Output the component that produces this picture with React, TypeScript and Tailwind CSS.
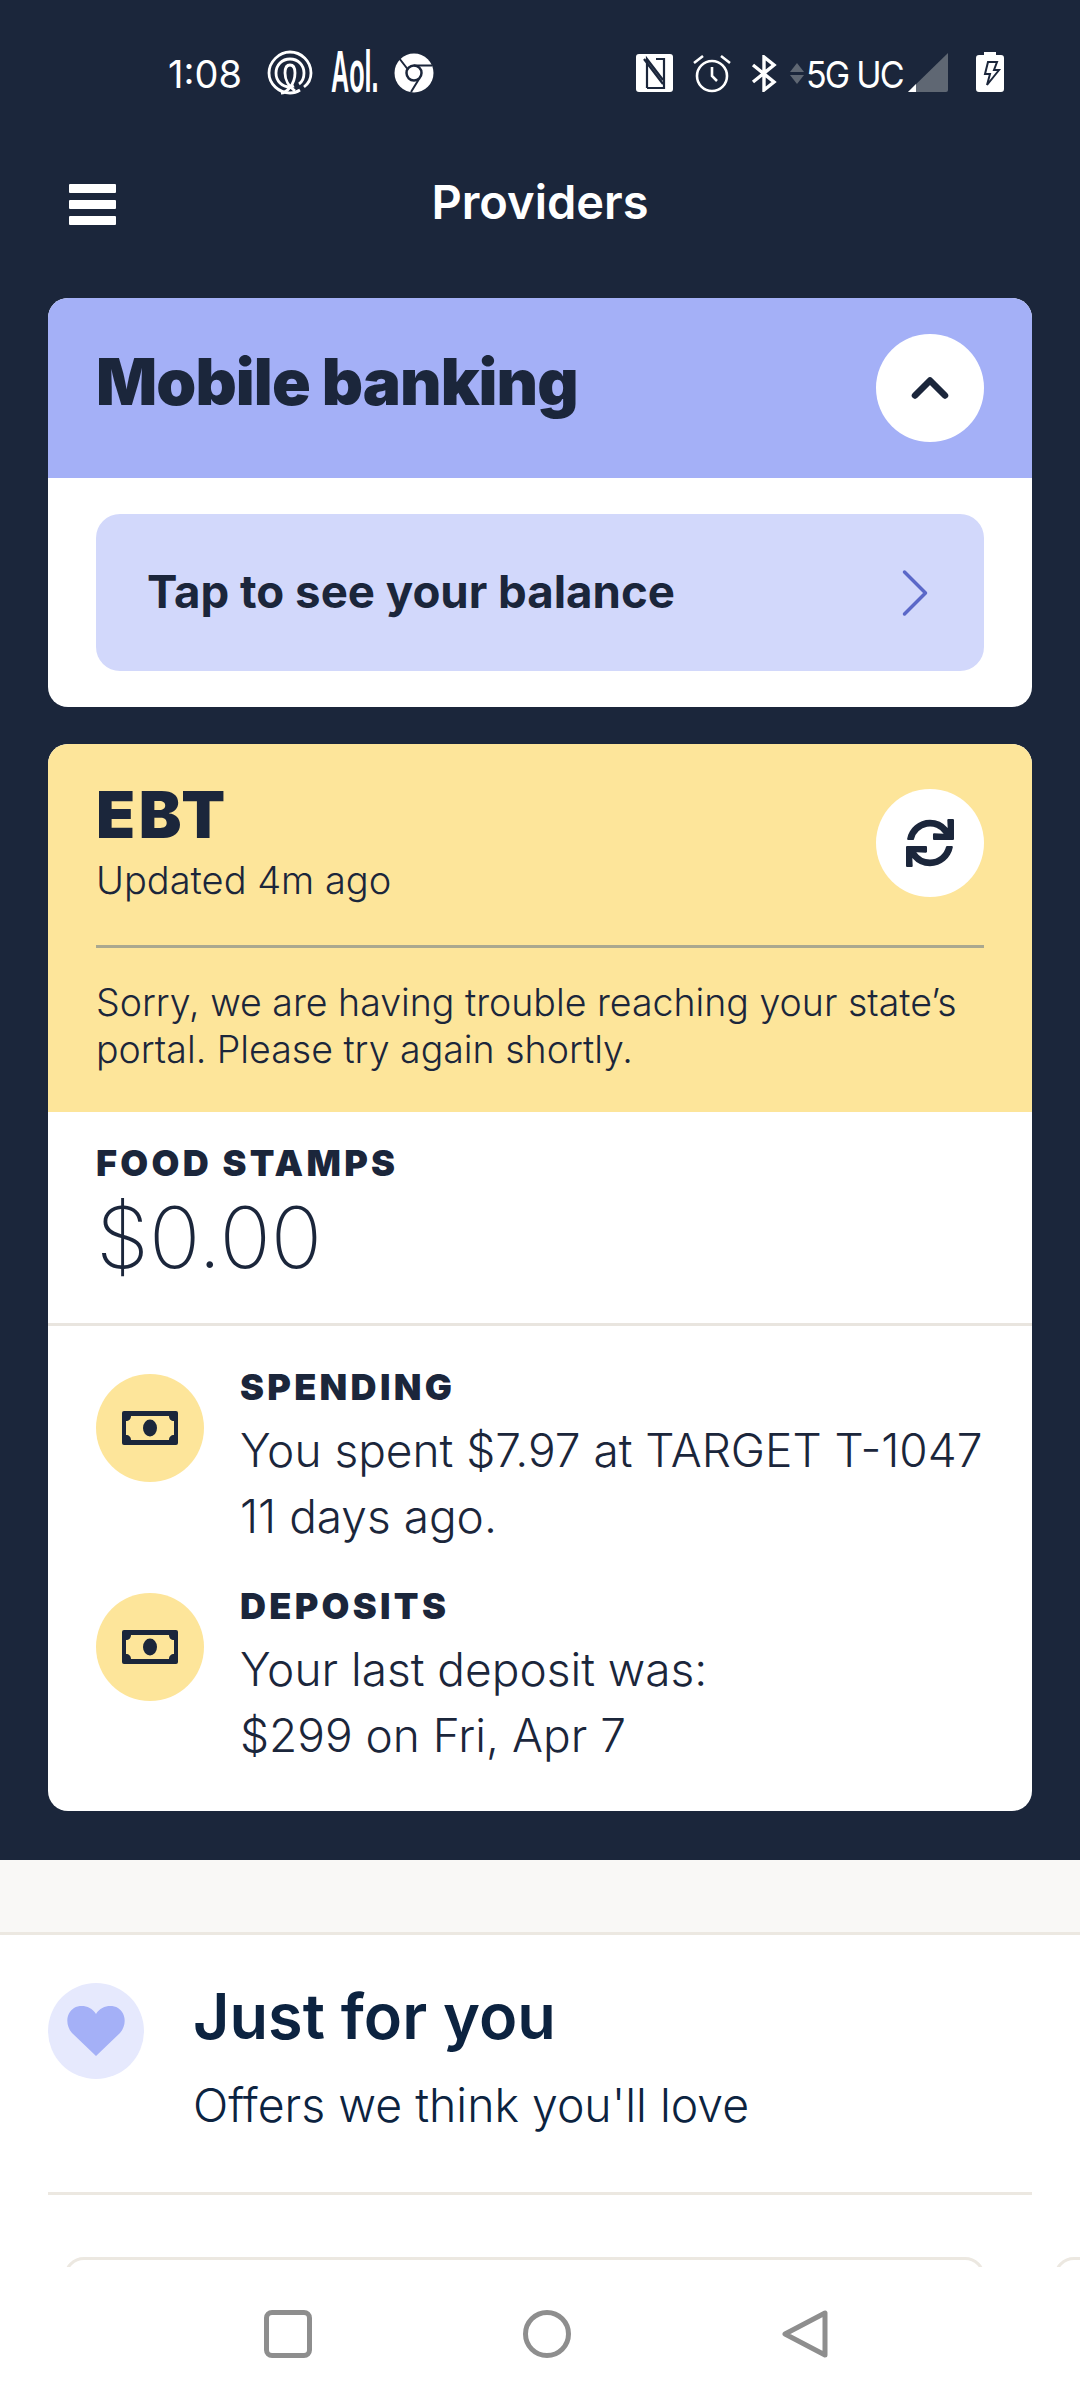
import React from 'react';
import { ChevronRight, ChevronUp } from 'lucide-react';
import { FaSync } from 'react-icons/fa';

const sans = 'font-["Inter","Noto_Sans",sans-serif]';

const ThreadsIcon = () => (
  <svg width="46" height="46" viewBox="0 0 46 46" fill="none" stroke="white" strokeWidth="2.8">
    <path d="M33 40c-3 2-6 3-10 3C12 43 2 34 2 23S12 2 23 2s21 9 21 21c0 6-3 11-7 14" />
    <path d="M27 36c-1 .5-3 1-4 1-8 0-14-6-14-14S15 9 23 9s14 6 14 14c0 5-2 9-5 11" />
    <path d="M14 43c5 0 14-8 14-20 0-5-2-8-5-8s-5 3-5 8c0 7 4 14 10 18" />
  </svg>
);

const ChromeIcon = () => (
  <svg width="40" height="40" viewBox="0 0 40 40">
    <circle cx="20" cy="20" r="19.5" fill="white" />
    <circle cx="20" cy="20" r="7.5" fill="white" stroke="#1b263b" strokeWidth="2.5" />
    <path d="M20 12.5h18M13.5 16 5 5M25 26l-8 13" stroke="#1b263b" strokeWidth="2" fill="none" />
  </svg>
);

const NfcIcon = () => (
  <svg width="37" height="38" viewBox="0 0 37 38">
    <rect width="37" height="38" rx="3" fill="white" />
    <path d="M11 34V5l16 21M8 5l19 25M20 5h8v29H11" stroke="#1b263b" strokeWidth="2.2" fill="none" />
  </svg>
);

const AlarmIcon = () => (
  <svg width="40" height="41" viewBox="0 0 40 41" fill="none" stroke="white" strokeWidth="2.6">
    <circle cx="20" cy="24" r="15" />
    <path d="M20 15v9l5 5M2 11l9-7M38 11l-9-7" />
  </svg>
);

const BluetoothIcon = () => (
  <svg width="26" height="37" viewBox="0 0 26 37" fill="none" stroke="white" strokeWidth="3.4">
    <path d="M2 10l21 17-10 8V2l10 8L2 27" />
  </svg>
);

const SignalIcon = () => (
  <svg width="40" height="39" viewBox="0 0 40 39">
    <path d="M40 0v37a2 2 0 0 1-2 2H0z" fill="#5f6773" />
    <path d="M8 31v8H0z" fill="white" />
  </svg>
);

const BatteryIcon = () => (
  <svg width="28" height="40" viewBox="0 0 28 40">
    <path d="M8 0h12v3h5a3 3 0 0 1 3 3v31a3 3 0 0 1-3 3H3a3 3 0 0 1-3-3V6a3 3 0 0 1 3-3h5z" fill="white" />
    <path d="M12 10h9l-3 8h5L11 33l3-11H9z" fill="none" stroke="#1b263b" strokeWidth="2" />
  </svg>
);

const BillIcon = () => (
  <svg width="56" height="34" viewBox="0 0 56 34">
    <rect width="56" height="34" rx="2" fill="#1b263b" />
    <path d="M9 5h38c0 3 2 5 5 5v14c-3 0-5 2-5 5H9c0-3-2-5-5-5V10c3 0 5-2 5-5z" fill="#fde59a" />
    <ellipse cx="28" cy="17" rx="7" ry="8.5" fill="#1b263b" />
  </svg>
);

const Activity = ({ label, lines }: { label: string; lines: string[] }) => (
  <div className="flex gap-[36px]">
    <div className="mt-[6px] flex h-[108px] w-[108px] shrink-0 items-center justify-center rounded-full bg-[#fde59a]">
      <BillIcon />
    </div>
    <div className="min-w-0">
      <div className="mb-[11px] text-[36px] leading-[38px] font-black tracking-[3.3px]">{label}</div>
      {lines.map((line) => (
        <div key={line} className="text-[46px] leading-[66px] font-light whitespace-nowrap">
          {line}
        </div>
      ))}
    </div>
  </div>
);

export default function App() {
  return (
    <div className={`${sans} flex h-[2400px] w-[1080px] flex-col overflow-hidden bg-white text-[#1b263b]`}>
      <div className="min-h-0 flex-1 overflow-hidden">
        <div className="h-[1860px] bg-[#1b263b]">
          <div className="flex h-[144px] items-start pt-[50px] text-white">
            <span className="ml-[168px] mt-[2px] w-[73px] text-[38px] leading-[44px]">1:08</span>
            <span className="ml-[26px]"><ThreadsIcon /></span>
            <span className="ml-[18px] w-[46px] shrink-0 overflow-visible">
              <span className="block origin-left scale-x-[0.42] font-['Liberation_Sans',sans-serif] text-[60px] leading-[44px] font-bold whitespace-nowrap">Aol.</span>
            </span>
            <span className="ml-[17px] mt-[3px]"><ChromeIcon /></span>
            <span className="ml-[202px] mt-[4px]"><NfcIcon /></span>
            <span className="ml-[19px] mt-[2px]"><AlarmIcon /></span>
            <span className="ml-[19px] mt-[5px]"><BluetoothIcon /></span>
            <span className="ml-[13px] mt-[13px] flex w-[15px] flex-col gap-[3px]">
              <span className="h-0 w-0 border-x-[7px] border-b-[9px] border-x-transparent border-b-[#5f6773]" />
              <span className="h-0 w-0 border-x-[7px] border-t-[9px] border-x-transparent border-t-[#5f6773]" />
            </span>
            <span className="ml-[1px] mt-[3px] w-[102px] shrink-0">
              <span className="block origin-left scale-x-[0.92] text-[37px] leading-[44px] whitespace-nowrap tracking-[-2px]">5G UC</span>
            </span>
            <span className="mt-[3px]"><SignalIcon /></span>
            <span className="ml-[28px] mt-[2px]"><BatteryIcon /></span>
          </div>

          <div className="relative flex h-[154px] items-start justify-center pt-[32px]">
            <div className="absolute top-[40px] left-[69px] flex w-[47px] flex-col gap-[7px]">
              <span className="h-[9px] rounded-[1px] bg-white" />
              <span className="h-[9px] rounded-[1px] bg-white" />
              <span className="h-[9px] rounded-[1px] bg-white" />
            </div>
            <h1 className="text-[47px] leading-[52px] font-semibold text-white">Providers</h1>
          </div>

          <div className="mx-[48px] overflow-hidden rounded-[20px] bg-white">
            <div className="flex h-[180px] items-center justify-between bg-[#a4b0f7] px-[48px]">
              <h2 className="mb-[12px] text-[64px] font-black tracking-[-0.9px]">Mobile banking</h2>
              <div className="flex h-[108px] w-[108px] items-center justify-center rounded-full bg-white">
                <ChevronUp size={60} strokeWidth={2.6} />
              </div>
            </div>
            <div className="p-[36px_48px]">
              <div className="flex h-[157px] items-center justify-between rounded-[24px] bg-[#d2d8fb] pr-[27px] pl-[51px]">
                <span className="text-[45.6px] font-bold">Tap to see your balance</span>
                <ChevronRight size={84} strokeWidth={1} className="text-[#5b68c8]" />
              </div>
            </div>
          </div>

          <div className="mx-[48px] mt-[37px] overflow-hidden rounded-[20px] bg-white">
            <div className="h-[368px] bg-[#fde59a] px-[48px]">
              <div className="flex h-[204px] justify-between border-b-[3px] border-[#aaa88f] pt-[45px]">
                <div>
                  <div className="text-[64px] leading-[52px] font-black tracking-[3.5px]">EBT</div>
                  <div className="mt-[17px] text-[38px] leading-[44px] font-light">Updated 4m ago</div>
                </div>
                <div className="flex h-[108px] w-[108px] items-center justify-center rounded-full bg-white">
                  <FaSync size={48} />
                </div>
              </div>
              <p className="mt-[31px] text-[37.5px] leading-[47px] font-light">
                Sorry, we are having trouble reaching your state’s portal. Please try again shortly.
              </p>
            </div>
            <div className="h-[214px] border-b-[3px] border-[#e9e5df] px-[48px] pt-[32px]">
              <div className="text-[36px] leading-[38px] font-black tracking-[3.3px]">FOOD STAMPS</div>
              <div className="mt-[11px] text-[85px] leading-[90px] font-extralight">$0.00</div>
            </div>
            <div className="flex h-[485px] flex-col gap-[38px] px-[48px] pt-[42px]">
              <Activity label="SPENDING" lines={['You spent $7.97 at TARGET T-1047', '11 days ago.']} />
              <Activity label="DEPOSITS" lines={['Your last deposit was:', '$299 on Fri, Apr 7']} />
            </div>
          </div>
        </div>

        <div className="h-[75px] border-b-[3px] border-[#ece8e1] bg-[#f9f8f6]" />

        <div className="mx-[48px] flex h-[260px] gap-[49px] border-b-[3px] border-[#ece8e1] pt-[48px]">
          <div className="flex h-[96px] w-[96px] shrink-0 items-center justify-center rounded-full bg-[#e6e9fd]">
            <svg width="58" height="50" viewBox="0 0 58 50">
              <path d="M29 50 5 27C-2 19-1 7 7 2c7-4 17-2 22 6 5-8 15-10 22-6 8 5 9 17 2 25z" fill="#a4b0f7" />
            </svg>
          </div>
          <div className="text-[#0c2340]">
            <div className="text-[63px] leading-[66px] font-semibold">Just for you</div>
            <div className="mt-[31px] text-[46.4px] leading-[50px] font-light">Offers we think you'll love</div>
          </div>
        </div>

        <div className="mt-[62px] flex gap-[69px] pl-[64px]">
          <div className="h-[60px] w-[921px] shrink-0 rounded-[20px] border-[3px] border-[#ece8e1]" />
          <div className="h-[60px] w-[300px] shrink-0 rounded-[20px] border-[3px] border-[#ece8e1]" />
        </div>
      </div>

      <nav className="flex h-[133px] items-start gap-[211px] bg-white pt-[43px] pl-[264px]">
        <span className="h-[48px] w-[48px] rounded-[8px] border-[5px] border-[#8e8e8e]" />
        <span className="h-[48px] w-[48px] rounded-full border-[5px] border-[#8e8e8e]" />
        <svg width="46" height="48" viewBox="0 0 46 48" fill="none" stroke="#8e8e8e" strokeWidth="5" strokeLinejoin="round">
          <path d="M43 3v42L3 24z" />
        </svg>
      </nav>
    </div>
  );
}
